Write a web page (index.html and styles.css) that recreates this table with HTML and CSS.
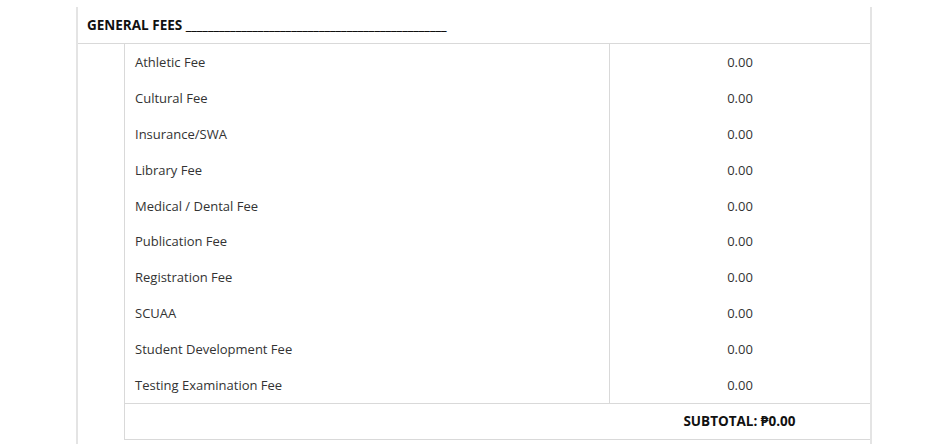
FILE: index.html
```html
<!DOCTYPE html>
<html lang="en">
<head>
    <meta charset="UTF-8">
    <meta name="viewport" content="width=device-width, initial-scale=1.0">
    <title>General Fees</title>
    <link rel="stylesheet" href="styles.css">
</head>
<body>
    <div class="panel">
        <div class="panel-head">GENERAL FEES _______________________________________________</div>
        <table class="fees">
            <tbody>
                <tr><td class="name">Athletic Fee</td><td class="amount">0.00</td></tr>
                <tr><td class="name">Cultural Fee</td><td class="amount">0.00</td></tr>
                <tr><td class="name">Insurance/SWA</td><td class="amount">0.00</td></tr>
                <tr><td class="name">Library Fee</td><td class="amount">0.00</td></tr>
                <tr><td class="name">Medical / Dental Fee</td><td class="amount">0.00</td></tr>
                <tr><td class="name">Publication Fee</td><td class="amount">0.00</td></tr>
                <tr><td class="name">Registration Fee</td><td class="amount">0.00</td></tr>
                <tr><td class="name">SCUAA</td><td class="amount">0.00</td></tr>
                <tr><td class="name">Student Development Fee</td><td class="amount">0.00</td></tr>
                <tr><td class="name">Testing Examination Fee</td><td class="amount">0.00</td></tr>
                <tr class="subtotal"><td></td><td class="total">SUBTOTAL: ₱0.00</td></tr>
            </tbody>
        </table>
    </div>
</body>
</html>
```

FILE: styles.css
```css
:root {
    --panel-border: #e4e4e4;
    --line-color: #d9d9d9;
    --text-color: #333;
}

body {
    margin: 0;
    font-family: 'Open Sans', 'Noto Sans', sans-serif;
    font-size: 13px;
    color: var(--text-color);
    background: #fff;
}

.panel {
    margin: 7px 0 0 76px;
    width: 792px;
    min-height: 437px;
    border-left: 2px solid var(--panel-border);
    border-right: 2px solid var(--panel-border);
}

.panel-head {
    height: 36px;
    line-height: 36px;
    padding-left: 9px;
    font-size: 13.5px;
    font-weight: bold;
    color: #111;
    border-bottom: 1px solid var(--line-color);
    white-space: nowrap;
    overflow: hidden;
}

.fees {
    margin-left: 46px;
    width: 746px;
    border-spacing: 0;
    border-left: 1px solid var(--line-color);
    border-bottom: 1px solid var(--line-color);
}

.fees td {
    height: 35.9px;
    padding: 0 10px;
    box-sizing: border-box;
}

.fees .name {
    width: 484px;
}

.fees .amount {
    text-align: center;
    border-left: 1px solid var(--line-color);
}

.subtotal td {
    height: 36px;
    border-top: 1px solid var(--line-color);
}

.subtotal .total {
    text-align: center;
    font-size: 13.5px;
    font-weight: bold;
    color: #111;
}
```
